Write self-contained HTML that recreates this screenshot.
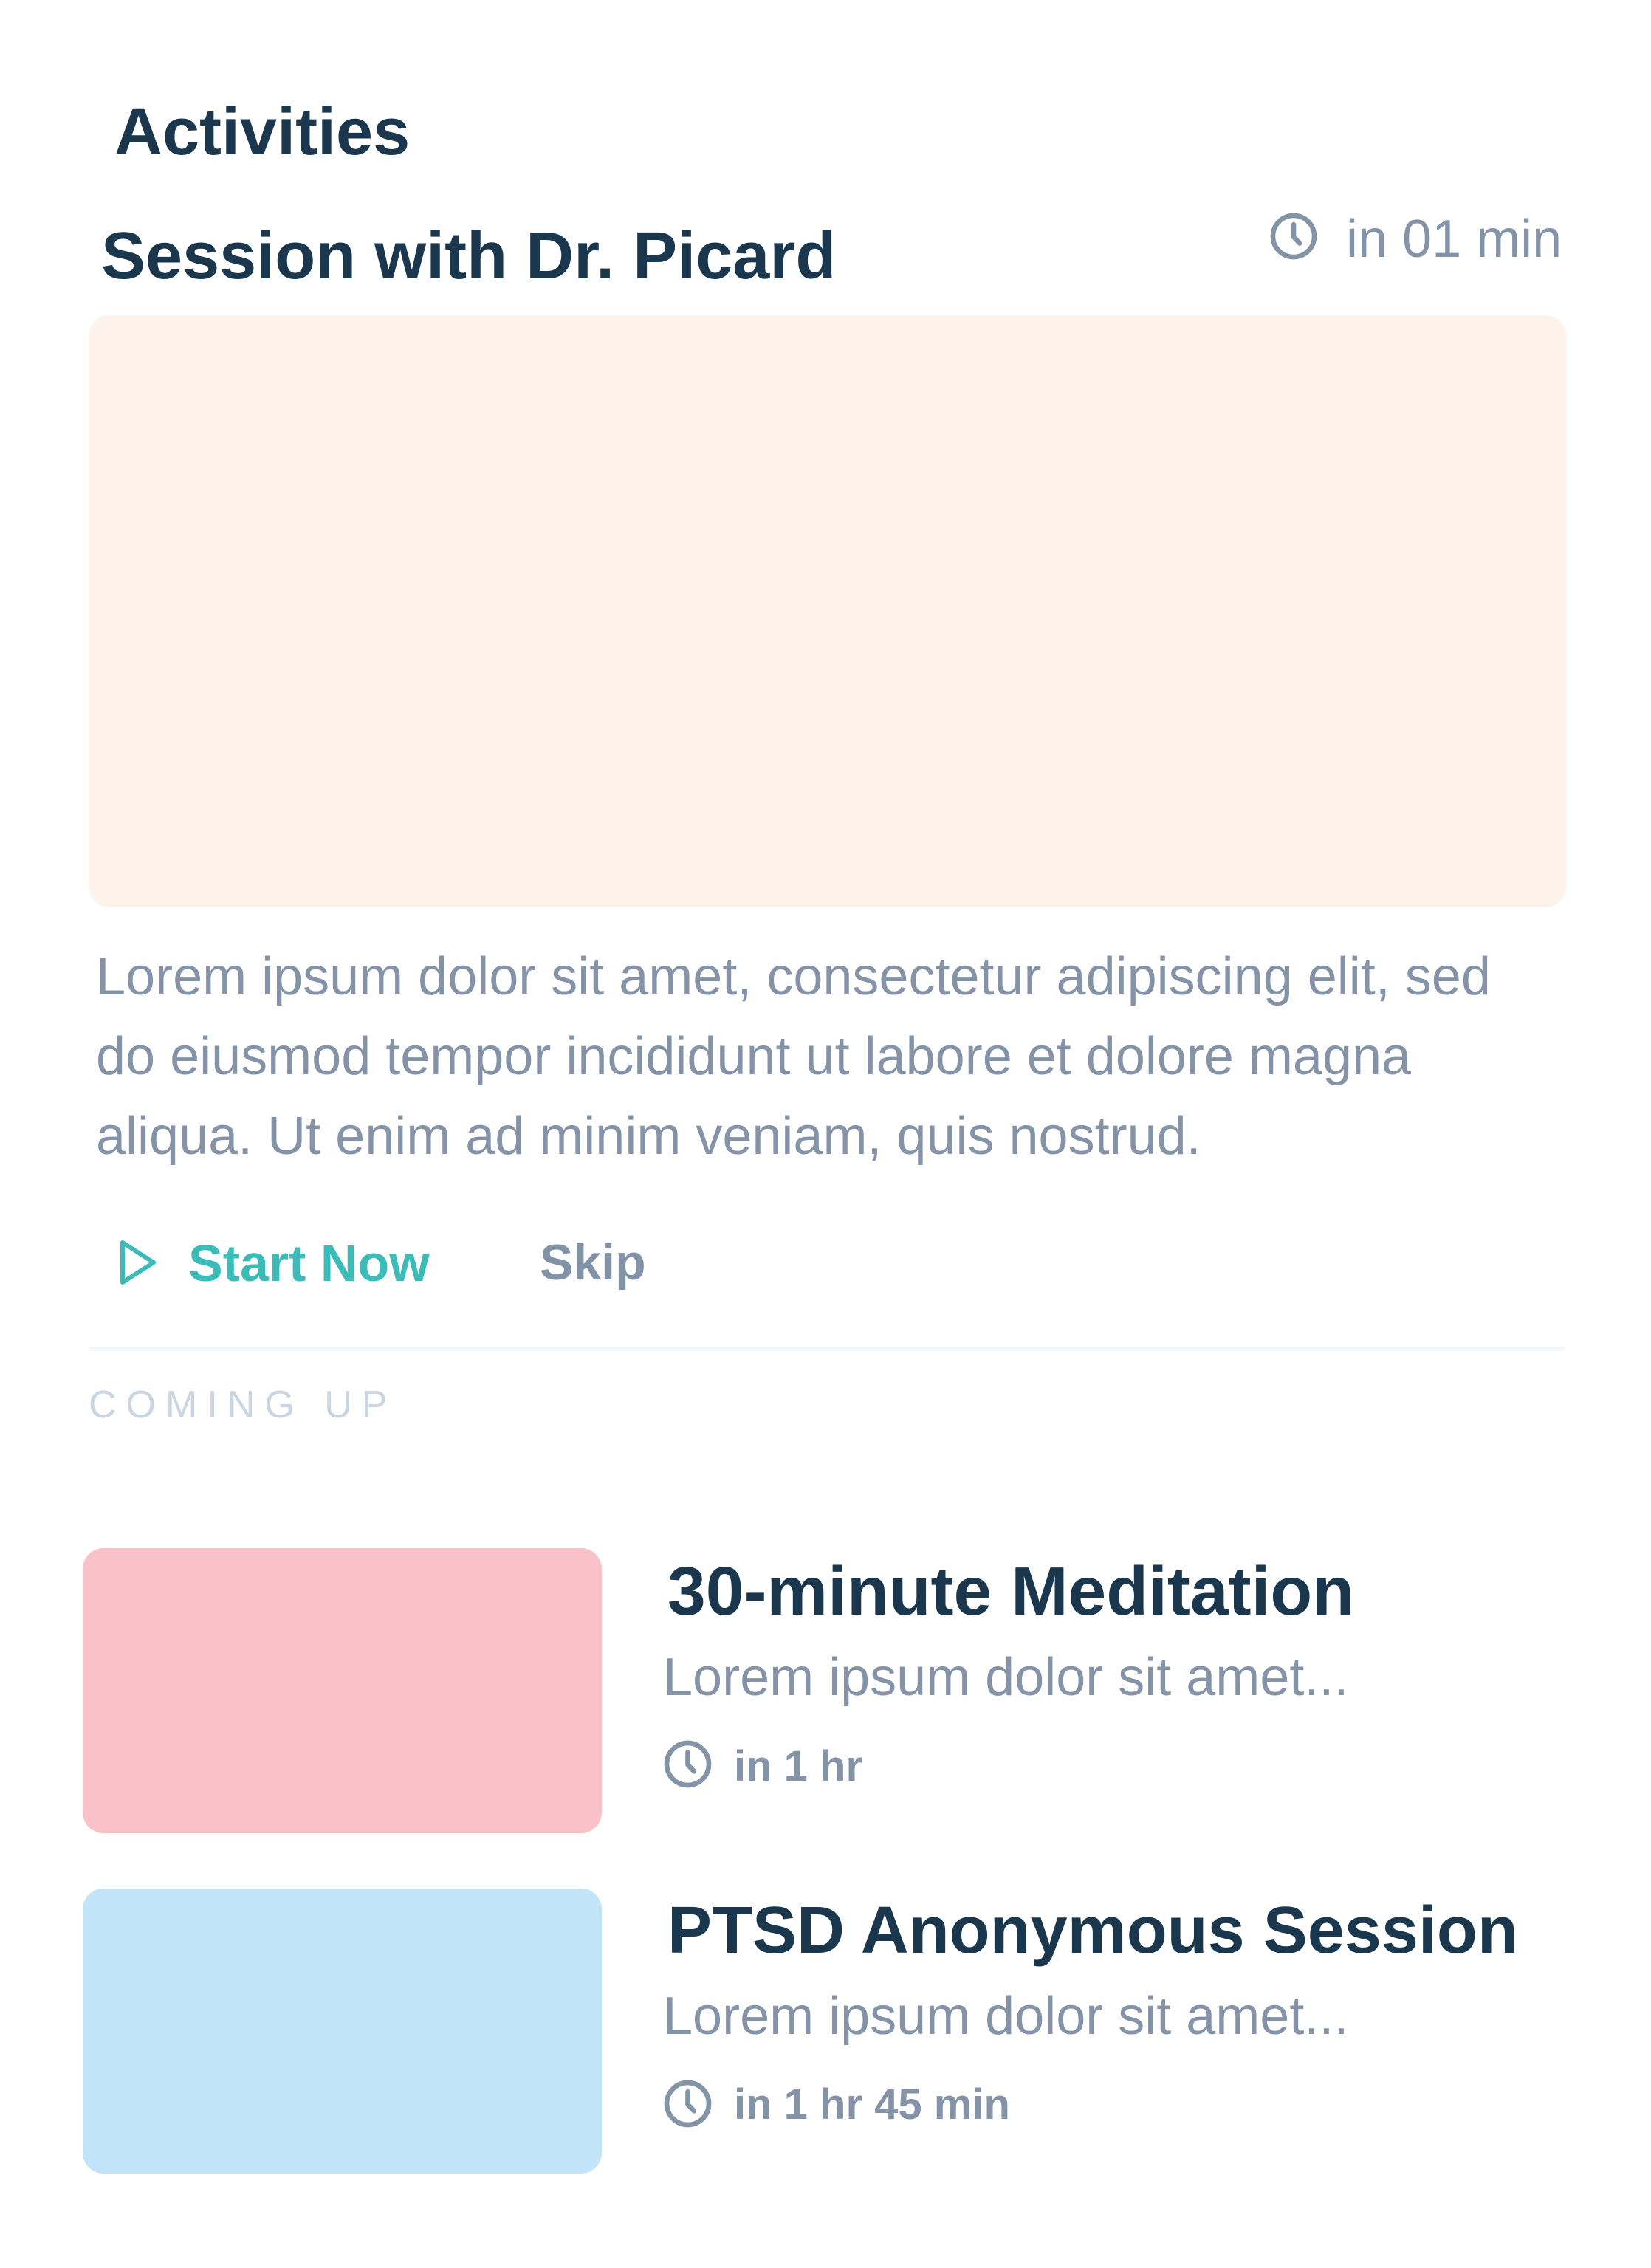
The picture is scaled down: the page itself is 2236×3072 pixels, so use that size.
<!DOCTYPE html>
<html><head><meta charset="utf-8"><style>
html,body{margin:0;padding:0;background:#fff;}
body{width:2236px;height:3072px;position:relative;overflow:hidden;font-family:"Liberation Sans",Arial,sans-serif;}
.a{position:absolute;white-space:nowrap;line-height:1;}
.dark{color:#1a374d;font-weight:bold;}
.gray{color:#8493a7;}
.box{position:absolute;border-radius:28px;}
</style></head><body>
<div class="a dark" style="left:155px;top:134px;font-size:90px;">Activities</div>
<div class="a dark" style="left:137px;top:302px;font-size:90px;">Session with Dr. Picard</div>
<svg class="a" style="left:1719px;top:287px;" width="66" height="66" viewBox="0 0 24 24"><circle cx="12" cy="12" r="10.2" fill="none" stroke="#8494a7" stroke-width="2.4"/><path d="M12 6.2V12.3L15 15.5" fill="none" stroke="#8494a7" stroke-width="2.4" stroke-linecap="round" stroke-linejoin="round"/></svg>
<div class="a gray" style="left:1823px;top:288px;font-size:72px;">in 01 min</div>
<div class="box" style="left:120px;top:427px;width:2001px;height:802px;background:#fef3ea;"></div>
<div class="a gray" style="left:130px;top:1269px;font-size:72px;line-height:108px;">Lorem ipsum dolor sit amet, consectetur adipiscing elit, sed<br>do eiusmod tempor incididunt ut labore et dolore magna<br>aliqua. Ut enim ad minim veniam, quis nostrud.</div>
<svg class="a" style="left:160px;top:1677px;" width="56" height="66" viewBox="0 0 56 66"><path d="M6 6L48 33L6 60Z" fill="none" stroke="#3bbcb9" stroke-width="6" stroke-linejoin="round"/></svg>
<div class="a" style="left:255px;top:1676px;font-size:70px;font-weight:bold;color:#3bbcb9;">Start Now</div>
<div class="a" style="left:731px;top:1676px;font-size:68px;font-weight:bold;color:#8393a7;">Skip</div>
<div style="position:absolute;left:120px;top:1824px;width:2000px;height:6px;background:#f3f6f8;"></div>
<div class="a" style="left:120px;top:1877px;font-size:52px;letter-spacing:13px;color:#c9d5e1;">COMING UP</div>
<div class="box" style="left:112px;top:2097px;width:703px;height:386px;background:#f9c2c9;"></div>
<div class="a dark" style="left:904px;top:2109px;font-size:93px;">30-minute Meditation</div>
<div class="a gray" style="left:898px;top:2236px;font-size:72px;">Lorem ipsum dolor sit amet...</div>
<svg class="a" style="left:898px;top:2356px;" width="67" height="67" viewBox="0 0 24 24"><circle cx="12" cy="12" r="10.2" fill="none" stroke="#8494a7" stroke-width="2.4"/><path d="M12 6.2V12.3L15 15.5" fill="none" stroke="#8494a7" stroke-width="2.4" stroke-linecap="round" stroke-linejoin="round"/></svg>
<div class="a gray" style="left:994px;top:2364px;font-size:58px;font-weight:bold;">in 1 hr</div>
<div class="box" style="left:112px;top:2558px;width:703px;height:386px;background:#c1e4f9;"></div>
<div class="a dark" style="left:904px;top:2570px;font-size:90px;">PTSD Anonymous Session</div>
<div class="a gray" style="left:898px;top:2695px;font-size:72px;">Lorem ipsum dolor sit amet...</div>
<svg class="a" style="left:898px;top:2816px;" width="67" height="67" viewBox="0 0 24 24"><circle cx="12" cy="12" r="10.2" fill="none" stroke="#8494a7" stroke-width="2.4"/><path d="M12 6.2V12.3L15 15.5" fill="none" stroke="#8494a7" stroke-width="2.4" stroke-linecap="round" stroke-linejoin="round"/></svg>
<div class="a gray" style="left:994px;top:2822px;font-size:58px;font-weight:bold;">in 1 hr 45 min</div>
</body></html>
